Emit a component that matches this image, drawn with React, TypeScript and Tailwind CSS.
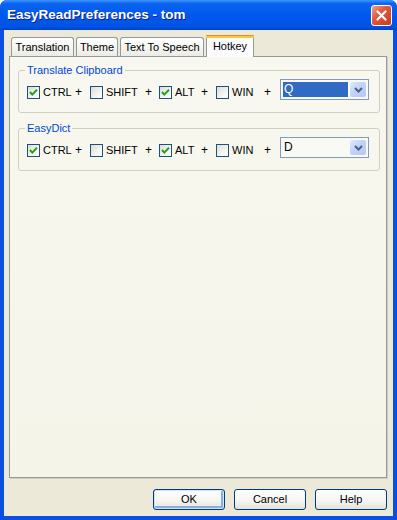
import React from "react";

const font = { fontFamily: '"Liberation Sans", Arial, sans-serif' };

function CheckBox({ checked, label, width }: { checked: boolean; label: string; width: string }) {
  return (
    <div className={`flex items-center mt-[7px] ${width}`}>
      <div className="w-[13px] h-[13px] border border-[#1C5180] bg-[linear-gradient(135deg,#DCDCD7_0%,#F4F4F0_60%,#FFFFFF_100%)] flex items-center justify-center">
        {checked && (
          <svg width="11" height="11" viewBox="0 0 11 11">
            <path d="M2 5 L4.3 7.6 L9 2.8" fill="none" stroke="#21A121" strokeWidth="2" />
          </svg>
        )}
      </div>
      <span className="ml-[3px] text-[11px] leading-[13px] text-black">{label}</span>
    </div>
  );
}

function Plus({ width }: { width: string }) {
  return <span className={`mt-[6px] text-[12px] leading-[14px] text-black ${width}`}>+</span>;
}

function Combo({ value, selected }: { value: string; selected: boolean }) {
  return (
    <div className="w-[89px] h-[21px] border border-[#7F9DB9] bg-[#FAFAF4] flex p-[2px] gap-[2px]">
      <div
        className={`flex-1 flex items-center pl-[1px] text-[12px] leading-[15px] ${
          selected ? "bg-[#316AC5] text-white" : "text-black"
        }`}
      >
        {value}
      </div>
      <div className="w-[16px] rounded-[2px] bg-[linear-gradient(135deg,#E2EBFD_0%,#C1D3FB_45%,#B4C8F6_100%)] flex items-center justify-center">
        <svg width="9" height="6" viewBox="0 0 9 6">
          <path d="M1 1 L4.5 4.5 L8 1" fill="none" stroke="#4D6185" strokeWidth="2" />
        </svg>
      </div>
    </div>
  );
}

function HotkeyGroup({ title, keyValue, selected, className }: { title: string; keyValue: string; selected: boolean; className: string }) {
  return (
    <fieldset className={`w-[362px] ml-[8px] border border-[#D0D0BF] rounded-[3px] pl-[8px] pt-[2px] pb-[12px] ${className}`}>
      <legend className="px-[2px] -ml-[2px] text-[11px] leading-[13px] text-[#0046D5]">{title}</legend>
      <div className="flex items-start">
        <CheckBox checked label="CTRL" width="w-[48px]" />
        <Plus width="w-[15px]" />
        <CheckBox checked={false} label="SHIFT" width="w-[55px]" />
        <Plus width="w-[14px]" />
        <CheckBox checked label="ALT" width="w-[42px]" />
        <Plus width="w-[15px]" />
        <CheckBox checked={false} label="WIN" width="w-[48px]" />
        <Plus width="w-[16px]" />
        <Combo value={keyValue} selected={selected} />
      </div>
    </fieldset>
  );
}

function Tab({ label, width, active }: { label: string; width: string; active?: boolean }) {
  if (active) {
    return (
      <div
        className={`${width} h-[22px] -mb-[1px] relative z-10 rounded-t-[3px] border-x border-[#919B9C] bg-[#FCFCFE] flex flex-col`}
      >
        <div className="h-[1px] bg-[#E68B2C] rounded-t-[3px] -mx-[1px]" />
        <div className="h-[2px] bg-[#FFC73C] -mx-[1px]" />
        <div className="flex-1 flex items-center justify-center pb-[2px] text-[11px] text-black">{label}</div>
      </div>
    );
  }
  return (
    <div
      className={`${width} h-[19px] rounded-t-[3px] border border-b-0 border-[#919B9C] bg-[linear-gradient(to_bottom,#FFFFFF_0%,#F6F6F2_50%,#ECEBE6_100%)] flex items-center justify-center pt-[1px] text-[11px] text-black`}
    >
      {label}
    </div>
  );
}

function Button({ label, isDefault }: { label: string; isDefault?: boolean }) {
  return (
    <div
      className={`w-[72px] h-[21px] rounded-[3px] border border-[#003C74] bg-[linear-gradient(to_bottom,#FFFFFF_0%,#F4F4F0_60%,#E3E2DA_100%)] flex items-center justify-center text-[11px] text-black ${
        isDefault ? "shadow-[inset_0_0_0_1px_#CEE7FF,inset_-1px_-1px_0_2px_#89ADE4]" : ""
      }`}
    >
      {label}
    </div>
  );
}

export default function App() {
  return (
    <div className="w-[397px] h-[520px] rounded-t-[7px] bg-[#0A4FE0] flex flex-col overflow-hidden" style={font}>
      <div className="h-[30px] flex items-center justify-between pl-[7px] pr-[5px] bg-[linear-gradient(to_bottom,#3D95FF_0%,#0A64EE_12%,#0058EE_50%,#0054E3_88%,#0042C8_100%)]">
        <span className="text-white font-bold text-[13.5px] [text-shadow:1px_1px_0_#0F1E8A]">EasyReadPreferences - tom</span>
        <div className="w-[21px] h-[21px] rounded-[3px] border border-white bg-[linear-gradient(135deg,#F0A28A_0%,#E2583A_40%,#C83A24_100%)] flex items-center justify-center">
          <svg width="11" height="11" viewBox="0 0 11 11">
            <path d="M1.5 1.5 L9.5 9.5 M9.5 1.5 L1.5 9.5" stroke="white" strokeWidth="2.2" strokeLinecap="round" />
          </svg>
        </div>
      </div>
      <div className="flex-1 mx-[4px] mb-[4px] bg-[#ECE9D8] flex flex-col">
        <div className="flex items-end gap-[2px] pt-[5px] pl-[7px]">
          <Tab label="Translation" width="w-[63px]" />
          <Tab label="Theme" width="w-[42px]" />
          <Tab label="Text To Speech" width="w-[84px]" />
          <Tab label="Hotkey" width="w-[48px]" active />
        </div>
        <div className="ml-[5px] w-[378px] h-[422px] border border-[#919B9C] bg-[linear-gradient(to_bottom,#F8F8F0_0%,#F5F4E9_100%)] shadow-[1px_1px_0_#D0CEC0]">
          <HotkeyGroup title="Translate Clipboard" keyValue="Q" selected className="mt-[7px]" />
          <HotkeyGroup title="EasyDict" keyValue="D" selected={false} className="mt-[9px]" />
        </div>
        <div className="flex justify-end gap-[9px] pr-[6px] mt-[11px]">
          <Button label="OK" isDefault />
          <Button label="Cancel" />
          <Button label="Help" />
        </div>
      </div>
    </div>
  );
}
